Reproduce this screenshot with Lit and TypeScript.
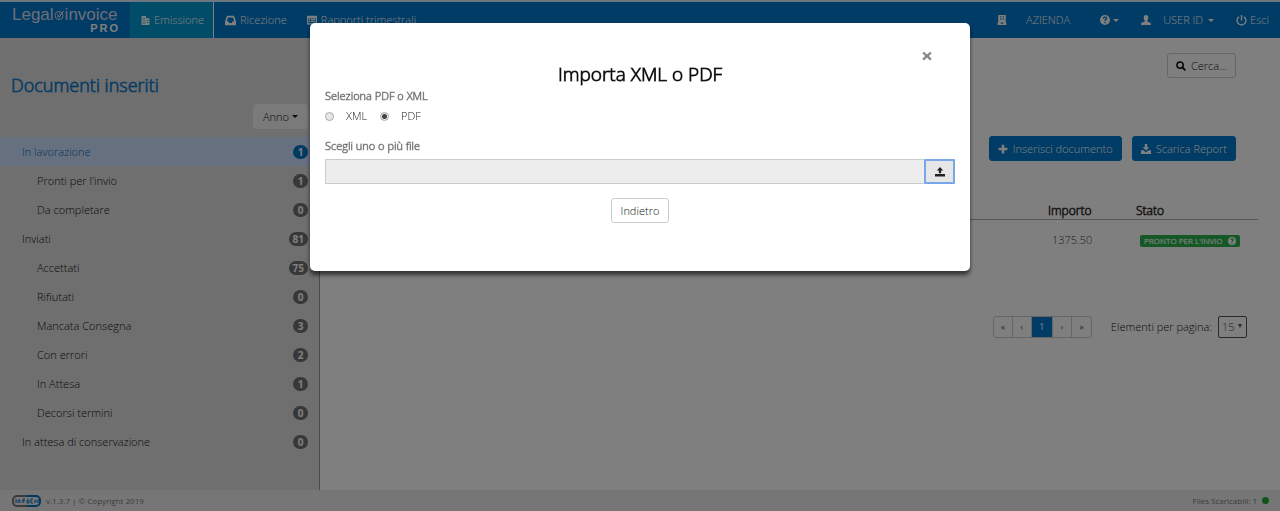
import { LitElement, html, css, svg } from "lit";
import { customElement, state } from "lit/decorators.js";
import { classMap } from "lit/directives/class-map.js";

const icon = (size: number, body: unknown) =>
  html`<svg width=${size} height=${size} viewBox="0 0 16 16" fill="currentColor" aria-hidden="true">${body}</svg>`;

const icons = {
  doc: svg`<path fill-rule="evenodd" d="M1 0h8v4h6v12H1zM3 4v1.500h4V4zm0 4v1.500h5V8zm0 4v1.500h5V12zm7-5v1.500h3V7zm0 4v1.500h3V11z"/>`,
  inbox: svg`<path fill-rule="evenodd" d="M3 1h10l3 8v6H0V9zM4.500 3.500L2.500 9H5l1 2.500h4L11 9h2.500l-2-5.500z"/>`,
  report: svg`<path fill-rule="evenodd" d="M0 1h16v14H0zM2 5v8h12V5zm1 1h2v2H3zm3 0h7v2H6zM3 9h2v2H3zm3 0h7v2H6z"/>`,
  building: svg`<path fill-rule="evenodd" d="M2 0h12v12h1v4H1v-4h1zM5 2v2h2V2zm4 0v2h2V2zM5 5.500v2h2v-2zm4 0v2h2v-2zM6 12v2h4v-2z"/>`,
  help: svg`<path fill-rule="evenodd" d="M8 0a8 8 0 1 1 0 16A8 8 0 0 1 8 0zM4.500 6h2.300c0-1 .5-1.500 1.300-1.500s1.300.4 1.300 1c0 1.200-2.500 1.500-2.500 4.200h2.300c0-1.700 2.500-2 2.500-4.400C11.700 3.500 10.200 2.500 8 2.500S4.500 3.900 4.500 6zM6.800 11v2.300h2.400V11z"/>`,
  user: svg`<path d="M8 0c2.600 0 3.700 1.900 3.700 4.300 0 2-.8 3.700-1.700 4.500v1.400l4.800 2.300c.8.400 1.200 1 1.200 2V16H0v-1.500c0-1 .4-1.600 1.200-2L6 10.200V8.800c-.9-.8-1.700-2.500-1.700-4.500C4.300 1.900 5.400 0 8 0z"/>`,
  power: svg`<path d="M7 0h2v8H7z"/><path d="M4.500 2.500a6.500 6.500 0 1 0 7 0" fill="none" stroke="currentColor" stroke-width="2"/>`,
  search: svg`<circle cx="6.500" cy="6.500" r="5" fill="none" stroke="currentColor" stroke-width="2.500"/><path d="M10 10l5 5" stroke="currentColor" stroke-width="3"/>`,
  plus: svg`<path d="M6 1h4v5h5v4h-5v5H6v-5H1V6h5z"/>`,
  download: svg`<path d="M6 0h4v5h3.500L8 10.500 2.500 5H6zM0 10h4l4 3 4-3h4v6H0z"/>`,
  upload: svg`<path d="M8 0l5 5.500H9.800V10H6.200V5.500H3zM0 11h16v4H0z"/>`,
  close: svg`<path d="M3 1l5 4.500L13 1l2.500 2.500L11 8l4.500 4.500L13 15l-5-4.500L3 15 .5 12.500 5 8 .5 3.500z"/>`,
};

interface Folder {
  name: string;
  count: number;
  sub?: boolean;
}

const folders: Folder[] = [
  { name: "In lavorazione", count: 1 },
  { name: "Pronti per l'invio", count: 1, sub: true },
  { name: "Da completare", count: 0, sub: true },
  { name: "Inviati", count: 81 },
  { name: "Accettati", count: 75, sub: true },
  { name: "Rifiutati", count: 0, sub: true },
  { name: "Mancata Consegna", count: 3, sub: true },
  { name: "Con errori", count: 2, sub: true },
  { name: "In Attesa", count: 1, sub: true },
  { name: "Decorsi termini", count: 0, sub: true },
  { name: "In attesa di conservazione", count: 0 },
];

const base = css`
  * {
    box-sizing: border-box;
  }
  button,
  input,
  select {
    font: inherit;
    color: inherit;
    margin: 0;
  }
  button {
    cursor: pointer;
  }
  a {
    color: inherit;
    text-decoration: none;
  }
  svg {
    display: block;
    flex: none;
  }
  .btn {
    display: inline-flex;
    align-items: center;
    justify-content: center;
    height: 25px;
    padding: 0 9px;
    border: 1px solid #ccc;
    border-radius: 3px;
    background: #fff;
    color: #111;
    white-space: nowrap;
  }
`;

@customElement("import-dialog")
export class ImportDialog extends LitElement {
  @state() private kind = "PDF";

  static styles = [
    base,
    css`
      :host {
        position: fixed;
        inset: 0;
        display: flex;
        justify-content: center;
        align-items: flex-start;
        padding: 23px 16px;
        background: rgba(0, 0, 0, 0.5);
      }
      .dialog {
        width: 660px;
        padding: 28px 15px 48px;
        border-radius: 5px;
        background: #fff;
        box-shadow: 0 4px 4px rgba(0, 0, 0, 0.6);
        color: #222;
      }
      .head {
        display: flex;
        justify-content: flex-end;
        padding-right: 23px;
      }
      .close {
        padding: 0;
        border: 0;
        background: none;
        color: #888;
      }
      h2 {
        margin: 0;
        font-size: 19px;
        line-height: 26px;
        font-weight: 300;
        -webkit-text-stroke: 1px rgba(0, 0, 0, 0.7);
        text-align: center;
        color: #000;
      }
      fieldset {
        margin: 0;
        padding: 0;
        border: 0;
      }
      .title {
        display: block;
        padding: 0;
        -webkit-text-stroke: 1px rgba(85, 85, 85, 0.4);
        line-height: 18px;
        color: #555;
      }
      .options {
        display: flex;
        gap: 13px;
        height: 22px;
        align-items: center;
        margin-bottom: 10px;
      }
      .option {
        display: flex;
        align-items: center;
        gap: 12px;
      }
      .radio {
        appearance: none;
        width: 9px;
        height: 9px;
        border: 1px solid #aaa;
        border-radius: 50%;
        background: #e6e6e6;
      }
      .radio:checked {
        background: radial-gradient(circle, #444 0 2px, #e6e6e6 3px);
      }
      .picker {
        display: flex;
        height: 25px;
        margin: 4px 0 14px;
      }
      .file {
        flex: 1;
        min-width: 0;
        border: 1px solid #ccc;
        border-right: 0;
        background: #ededed;
      }
      .upload {
        display: flex;
        align-items: center;
        justify-content: center;
        width: 31px;
        padding: 0;
        border: 2px solid #79a6ea;
        border-radius: 1px;
        background: #e6e6e6;
        color: #222;
      }
      .actions {
        display: flex;
        justify-content: center;
      }
    `,
  ];

  render() {
    return html`
      <div class="dialog" role="dialog" aria-modal="true" aria-labelledby="title">
        <div class="head">
          <button class="close" aria-label="Chiudi">${icon(10, icons.close)}</button>
        </div>
        <h2 id="title">Importa XML o PDF</h2>
        <fieldset>
          <legend class="title">Seleziona PDF o XML</legend>
          <div class="options">
            ${["XML", "PDF"].map(
              (k) => html`<label class="option"
                ><input class="radio" type="radio" name="kind" .checked=${this.kind === k} @change=${() => (this.kind = k)} />${k}</label
              >`
            )}
          </div>
        </fieldset>
        <label class="title" for="file">Scegli uno o più file</label>
        <div class="picker">
          <input id="file" class="file" type="text" readonly />
          <button class="upload" aria-label="Carica">${icon(10, icons.upload)}</button>
        </div>
        <div class="actions"><button class="btn">Indietro</button></div>
      </div>
    `;
  }
}

@customElement("app-root")
export class AppRoot extends LitElement {
  @state() private selected = 0;

  static styles = [
    base,
    css`
      :host {
        display: flex;
        flex-direction: column;
        min-height: 100vh;
        font: 300 11px/16px "Open Sans", sans-serif;
        color: #111;
        background: #fff;
      }
      .nav {
        display: flex;
        height: 38px;
        border-top: 2px solid #d8f0fa;
        padding-right: 11px;
        background: #0078cc;
        color: #fff;
        line-height: 34px;
        white-space: nowrap;
      }
      .logo {
        width: 130px;
        padding: 4px 0 0 12px;
      }
      .brand {
        display: flex;
        align-items: center;
        width: 106px;
        font: 17px/17px "Liberation Sans", sans-serif;
        color: #dde;
      }
      .pro {
        display: block;
        width: 108px;
        font: bold 11px/10px "Liberation Sans", sans-serif;
        letter-spacing: 2px;
        text-align: right;
      }
      .tab {
        display: flex;
        align-items: center;
        gap: 4px;
        padding: 0 9px 0 11px;
      }
      .tab.on {
        border-right: 1px solid #fff;
        background: #0098d2;
      }
      .tools {
        display: flex;
        align-items: center;
        gap: 22px;
        margin-left: auto;
      }
      .tool {
        display: flex;
        align-items: center;
        gap: 3px;
        padding: 0;
        border: 0;
        background: none;
        color: #fff;
      }
      .wide {
        gap: 12px;
      }
      .firm {
        gap: 19px;
        margin-right: 8px;
      }
      .caret {
        width: 0;
        border: 3px solid transparent;
        border-top-color: currentColor;
        border-bottom: 0;
      }
      .pair {
        display: flex;
        align-items: center;
        gap: 5px;
      }
      .body {
        display: flex;
        flex: 1;
      }
      .side {
        width: 25%;
        border-right: 1px solid #999;
        background: #dedede;
      }
      h1 {
        margin: 0;
        padding: 34px 11px 6px;
        font-size: 18px;
        line-height: 26px;
        font-weight: 300;
        -webkit-text-stroke: 1px rgba(0, 115, 197, 0.6);
        color: #0073c5;
      }
      .year {
        display: flex;
        justify-content: flex-end;
        padding: 0 11px 8px;
      }
      .year .btn {
        gap: 3px;
        background: #f4f4f4;
        border-color: #f4f4f4;
      }
      .list {
        margin: 0;
        padding: 0;
        list-style: none;
      }
      .folder {
        display: flex;
        align-items: center;
        justify-content: space-between;
        height: 29px;
        padding: 0 11px 0 22px;
        color: #111;
      }
      .folder.sub {
        padding-left: 37px;
      }
      .folder.on {
        background: #cfe0ff;
        color: #0068b8;
      }
      .badge {
        min-width: 15px;
        padding: 0 4px;
        border-radius: 7px;
        background: #707070;
        color: #fff;
        font-size: 10px;
        line-height: 14px;
        font-weight: 700;
        text-align: center;
      }
      .on .badge {
        background: #0073c5;
      }
      .main {
        flex: 1;
        min-width: 0;
        padding: 15px 22px 0 10px;
      }
      .bar {
        display: flex;
        justify-content: flex-end;
        gap: 10px;
        padding-right: 22px;
      }
      .bar .btn {
        gap: 5px;
        padding: 0 8px;
      }
      .search {
        margin-bottom: 58px;
      }
      .bar .primary {
        border-color: #0078cc;
        background: #0078cc;
        color: #fff;
      }
      table {
        width: 100%;
        margin: 40px 0 56px;
        border-collapse: collapse;
        table-layout: fixed;
      }
      th {
        padding: 3px 0 0;
        height: 18px;
        border-bottom: 1px solid #aaa;
        font-size: 12px;
        line-height: 14px;
        font-weight: 300;
        -webkit-text-stroke: 1px rgba(0, 0, 0, 0.5);
        text-align: left;
        color: #000;
      }
      td {
        padding: 0;
        height: 41px;
        color: #444;
      }
      .amount {
        width: 88px;
      }
      .state {
        width: 122px;
      }
      td.amount {
        padding-left: 4px;
      }
      td.state {
        padding-left: 4px;
      }
      .label {
        display: inline-flex;
        align-items: center;
        gap: 6px;
        height: 12px;
        padding: 0 4px;
        border-radius: 2px;
        background: #28b04a;
        color: #fff;
        font-size: 8px;
        font-weight: 400;
        -webkit-text-stroke: 1px rgba(255, 255, 255, 0.2);
        white-space: nowrap;
      }
      .foot {
        display: flex;
        justify-content: flex-end;
        align-items: center;
        gap: 19px;
        padding-right: 11px;
      }
      .pages {
        display: flex;
        margin: 0;
        padding: 0;
        list-style: none;
        border: 1px solid #ccc;
        border-radius: 3px;
      }
      .page {
        display: block;
        width: 19px;
        border-right: 1px solid #ccc;
        line-height: 20px;
        font-size: 9px;
        font-weight: 400;
        text-align: center;
        color: #555;
      }
      .pages li:last-child .page {
        border-right: 0;
      }
      .page.on {
        width: 21px;
        background: #0078cc;
        color: #fff;
      }
      .size {
        display: flex;
        align-items: center;
        gap: 6px;
      }
      .select {
        position: relative;
        display: flex;
      }
      select {
        appearance: none;
        width: 29px;
        height: 22px;
        padding: 0 3px;
        border: 1px solid #555;
        border-radius: 2px;
        background: #fff;
        color: #444;
      }
      .arrow {
        position: absolute;
        right: 5px;
        top: 8px;
        border: 2px solid transparent;
        border-top: 4px solid #555;
        border-bottom: 0;
        pointer-events: none;
      }
      .footer {
        display: flex;
        align-items: center;
        justify-content: space-between;
        height: 21px;
        padding: 0 11px 0 12px;
        background: #ededed;
        color: #777;
        font-size: 8px;
        font-weight: 400;
      }
      .dot {
        width: 7px;
        height: 7px;
        border-radius: 50%;
        background: #1ca838;
      }
    `,
  ];

  render() {
    return html`
      <header class="nav">
        <a class="logo" href="#">
          <span class="brand"
            >Legal<svg width="11" height="12" viewBox="0 0 11 12" fill="none" stroke="currentColor">
              <circle cx="5" cy="6.500" r="4" />
              <path d="M3 7l2 1.500 5-7M5 4l2 2M3 5l3 3" /></svg
            >invoice</span
          >
          <span class="pro">PRO</span>
        </a>
        <a class="tab on" href="#">${icon(9, icons.doc)}Emissione</a>
        <a class="tab" href="#">${icon(11, icons.inbox)}Ricezione</a>
        <a class="tab" href="#">${icon(10, icons.report)}Rapporti trimestrali</a>
        <div class="tools">
          <span class="tool firm">${icon(10, icons.building)}<span>AZIENDA</span></span>
          <button class="tool" aria-label="Aiuto">${icon(10, icons.help)}<span class="caret"></span></button>
          <button class="tool wide">${icon(10, icons.user)}<span class="pair">USER ID <span class="caret"></span></span></button>
          <a class="tool" href="#">${icon(11, icons.power)}Esci</a>
        </div>
      </header>
      <div class="body">
        <aside class="side">
          <h1>Documenti inseriti</h1>
          <div class="year"><button class="btn">Anno<span class="caret"></span></button></div>
          <ul class="list">
            ${folders.map(
              (f, i) => html`<li>
                <a
                  href="#"
                  class=${classMap({ folder: true, sub: !!f.sub, on: i === this.selected })}
                  @click=${() => (this.selected = i)}
                  ><span>${f.name}</span><span class="badge">${f.count}</span></a
                >
              </li>`
            )}
          </ul>
        </aside>
        <main class="main">
          <div class="bar search"><button class="btn">${icon(10, icons.search)}Cerca...</button></div>
          <div class="bar">
            <button class="btn primary">${icon(10, icons.plus)}Inserisci documento</button>
            <button class="btn primary">${icon(10, icons.download)}Scarica Report</button>
          </div>
          <table>
            <thead>
              <tr>
                <th></th>
                <th class="amount">Importo</th>
                <th class="state">Stato</th>
              </tr>
            </thead>
            <tbody>
              <tr>
                <td></td>
                <td class="amount">1375.50</td>
                <td class="state"><span class="label">PRONTO PER L'INVIO ${icon(8, icons.help)}</span></td>
              </tr>
            </tbody>
          </table>
          <div class="foot">
            <ul class="pages">
              ${["«", "‹", "1", "›", "»"].map(
                (p) => html`<li><a href="#" class=${classMap({ page: true, on: p === "1" })}>${p}</a></li>`
              )}
            </ul>
            <div class="size">
              <label for="size">Elementi per pagina:</label>
              <span class="select"
                ><select id="size">
                  <option>15</option></select
                ><span class="arrow"></span
              ></span>
            </div>
          </div>
        </main>
      </div>
      <footer class="footer">
        <span class="pair">
          <svg width="29" height="12" viewBox="0 0 29 12" fill="none" stroke-width="2">
            <path d="M15 1H5a4 4 0 0 0-4 4v2a4 4 0 0 0 4 4h10" stroke="#777" />
            <path d="M15 1h9a4 4 0 0 1 4 4v2a4 4 0 0 1-4 4h-9" stroke="#0073c5" />
            <path d="M4 4v4M6 8V5h2v3M11 8V4h2M10 6h3M15 5h2v3h-2zM21 4h-2v4h2M23 6h2M23 8V5M26 4v4" stroke="#0073c5" stroke-width="1" />
          </svg>
          v.1.3.7 | © Copyright 2019
        </span>
        <span class="pair">Files Scaricabili: 1 <span class="dot"></span></span>
      </footer>
      <import-dialog></import-dialog>
    `;
  }
}
